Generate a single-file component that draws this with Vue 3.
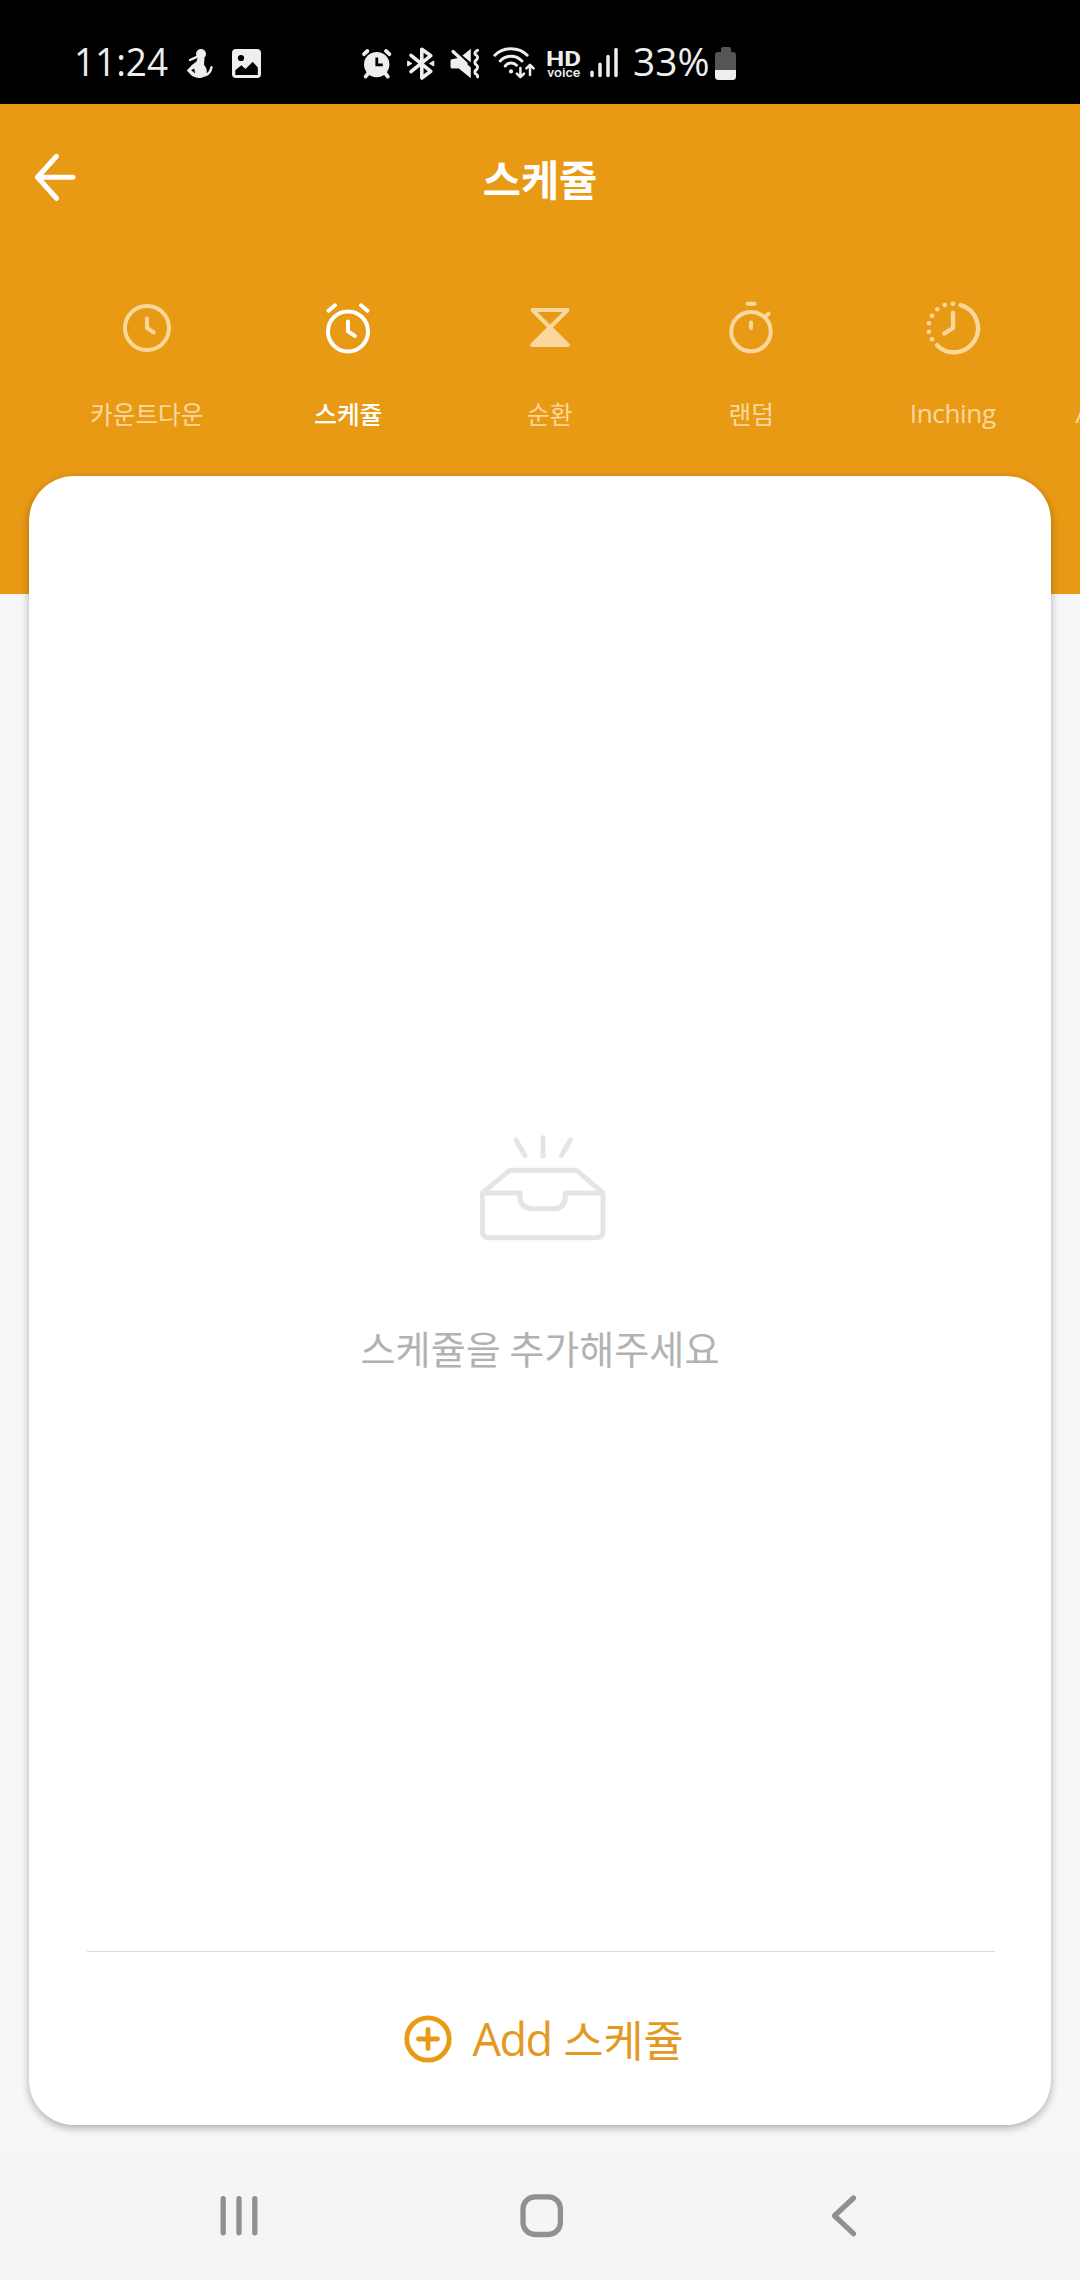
<script setup>
const tabs = [
  { id: 'countdown', label: '카운트다운' },
  { id: 'schedule', label: '스케쥴', active: true },
  { id: 'cycle', label: '순환' },
  { id: 'random', label: '랜덤' },
  { id: 'inching', label: 'Inching', latin: true },
]

const inchingDots = [
  [30, 5.7], [21.7, 7], [14.3, 11.3], [9, 17.7], [6, 25.3], [6, 33.7], [9, 41.3],
]
</script>

<template>
  <div class="screen">
    <div class="status">
      <svg class="time" width="96" height="40" viewBox="74 44 96 40">
        <text x="74" y="76.2" font-size="39" textLength="94" lengthAdjust="spacingAndGlyphs">11:24</text>
      </svg>
      <svg class="figure" width="32" height="40" viewBox="184 44 32 40">
        <circle cx="201" cy="54" r="5" />
        <path d="M197.5 58L204.5 58L204 65Q207.5 68 206.6 74Q204 78 199.5 77.9Q194 77.8 191 75L186.8 70.4Q191 65 196.5 61.5Z" />
        <path d="M190 60L196.5 57.2M205 75.3Q210.5 73.5 211.5 67.3" fill="none" stroke="#eee" stroke-width="2.4" stroke-linecap="round" />
        <path d="M191.2 70.3L194.2 68.4L195.2 73.6Z" fill="#000" />
      </svg>
      <svg class="gallery" width="33" height="40" viewBox="230 44 33 40">
        <rect x="232" y="49" width="29" height="29" rx="4" />
        <circle cx="241" cy="58" r="3.1" fill="#000" />
        <path d="M235.3 70.3L241.3 65.3L245.5 69L252.7 61.8L257.8 67.5V75H235.3Z" fill="#000" />
      </svg>
      <svg class="alarm" width="33" height="40" viewBox="360 44 33 40">
        <circle cx="376.7" cy="64.6" r="12.7" />
        <path d="M364 54.2L367.4 51M386 51L389.4 54.2M365.6 76.6L368.5 73M387.8 76.6L385 73" fill="none" stroke="#eee" stroke-width="3.8" stroke-linecap="round" />
        <path d="M376.8 57.5V64.8H382.8" fill="none" stroke="#000" stroke-width="2.8" />
      </svg>
      <svg class="icon" width="33" height="40" viewBox="404 44 33 40">
        <path d="M411 55.3L430.8 71.3L421.8 78V49.2L430.8 55.6L411 71.6" fill="none" stroke="#eee" stroke-width="3.6" stroke-linecap="round" stroke-linejoin="round" />
        <path d="M407.6 61L411.8 63.5L407.6 66ZM433.8 61L429.6 63.5L433.8 66Z" stroke="#eee" stroke-linejoin="round" />
      </svg>
      <svg class="icon" width="34" height="40" viewBox="448 44 34 40">
        <path d="M470.8 48.8V62.6L462.5 55.6ZM450.5 61Q450.5 59.2 452 59.2L460 57.5L470.8 67.5V78.2L458.8 68.4H452Q450.5 68.4 450.5 66.5Z" />
        <path d="M453 51.5L466 63.5" stroke="#eee" stroke-width="3.2" stroke-linecap="round" />
        <path d="M477.6 50.2Q474 52.5 475.2 54.4Q478.8 56.6 477 59.2Q474 61.4 475.2 64Q478.8 66 477 69Q474 71 475.2 73.6Q478 75 477.6 77" fill="none" stroke="#eee" stroke-width="2.8" stroke-linecap="round" />
      </svg>
      <svg class="wifi" width="45" height="40" viewBox="491 44 45 40">
        <g fill="none" stroke="#eee" stroke-width="2.9" stroke-linecap="round" stroke-linejoin="round">
          <path d="M494.8 55.3Q501 48.7 511 48.7T527.2 55.3M500.2 61Q504.5 56.2 511 56.2T522 61M505.2 66Q507.5 63 511 63T516.5 65.2" />
          <path d="M520.4 68V76.6M516.8 73.6L520.4 77L524 73.6M530 75V65.4M526.4 68.4L530 64.8L533.6 68.4" stroke-width="2.5" />
        </g>
        <circle cx="511" cy="71.4" r="2.1" />
      </svg>
      <svg class="wifi" width="37" height="40" viewBox="545 44 37 40">
        <text x="546" y="65.6" font-size="21" textLength="35" lengthAdjust="spacingAndGlyphs" class="roboto bold">HD</text>
        <text x="547.3" y="76.6" font-size="13.5" textLength="33" lengthAdjust="spacingAndGlyphs" class="roboto">voice</text>
      </svg>
      <svg class="signal" width="32" height="40" viewBox="588 44 32 40">
        <path d="M592 72.3V75.5M600 64.3V75.5M608 56.5V75.5M616 49.5V75.5" stroke="#eee" stroke-width="3.5" stroke-linecap="round" />
      </svg>
      <svg class="percent" width="80" height="40" viewBox="630 44 80 40">
        <text x="633" y="76.2" font-size="39" textLength="76.5" lengthAdjust="spacingAndGlyphs">33%</text>
      </svg>
      <svg class="battery" width="25" height="40" viewBox="713 44 25 40">
        <path d="M721 52V49Q721 47 723 47H729Q731 47 731 49V52H733Q736 52 736 55V70H715V55Q715 52 718 52Z" fill="#555" />
        <path d="M715 70H736V76.5Q736 80 732.5 80H718.5Q715 80 715 76.5Z" />
      </svg>
    </div>

    <header class="header">
      <div class="titlebar">
        <svg class="back" width="50" height="50" viewBox="0 0 50 50">
          <path d="M26.5 5.3L7.5 26.3L26.5 47.3M7.5 26.3H43" />
        </svg>
        <h1>스케쥴</h1>
      </div>
      <nav class="tabs">
        <div v-for="tab in tabs" :key="tab.id" class="tab" :class="{ active: tab.active, latin: tab.latin }">
          <svg width="60" height="60" viewBox="0 0 60 60">
            <template v-if="tab.id === 'countdown'">
              <circle cx="30" cy="30" r="22" />
              <path d="M30 20.5V30L36.8 34.5" />
            </template>
            <template v-else-if="tab.id === 'schedule'">
              <circle cx="30" cy="33.4" r="20" />
              <path d="M30 23.5V33.3L36.8 37.8M10.5 12.8L17 7.3M43 7.3L49.5 12.8" />
            </template>
            <template v-else-if="tab.id === 'cycle'">
              <path d="M12.5 12H47.5L12.5 47H47.5Z" />
              <path class="solid" d="M30 29.5L47.5 47H12.5Z" />
            </template>
            <template v-else-if="tab.id === 'random'">
              <circle cx="30" cy="33.6" r="19.7" />
              <path d="M26.7 5.7H33.6M44.8 18.3L47.6 15.6M30 24.5V30" />
            </template>
            <template v-else>
              <path d="M37.6 7.2A24 24 0 1 1 14 47.2M30 14.7V30L21.3 35.5" stroke-width="4.4" />
              <circle v-for="(d, i) in inchingDots" :key="i" class="solid" :cx="d[0]" :cy="d[1]" r="2.3" stroke="none" />
            </template>
          </svg>
          <span>{{ tab.label }}</span>
        </div>
        <div class="tab latin next"><span>A</span></div>
      </nav>
    </header>

    <main class="card">
      <section class="empty">
        <svg width="130" height="110" viewBox="415 70 390 330">
          <path d="M529 91L556 138M610 84V138M692 91L665 138" />
          <path d="M428 250L510 182H711L790 250V365Q790 384 771 384H447Q428 384 428 365ZM428 250H541V262Q543 297 580 297H642Q675 297 677 262V250H790" />
        </svg>
        <p>스케쥴을 추가해주세요</p>
      </section>
      <button class="add">
        <svg width="48" height="48" viewBox="0 0 48 48">
          <circle cx="24" cy="24" r="21.2" />
          <path d="M24 14.5V33.5M14.5 24H33.5" />
        </svg>
        <span class="add-en">Add</span><span class="add-ko">스케쥴</span>
      </button>
    </main>

    <footer class="navbar">
      <div><svg width="60" height="60" viewBox="0 0 60 60"><path d="M14.2 12.7V46.8M30 12.7V46.8M45.8 12.7V46.8" /></svg></div>
      <div><svg width="60" height="60" viewBox="0 0 60 60"><rect x="11" y="10.9" width="37.4" height="37.6" rx="12" /></svg></div>
      <div><svg width="60" height="60" viewBox="0 0 60 60"><path d="M39.5 12L20.5 29.8L39.5 47.6" /></svg></div>
    </footer>
  </div>
</template>

<style>
body {
  margin: 0;
  background: #f7f7f7;
}
</style>

<style scoped>
.screen {
  width: 1080px;
  height: 2280px;
  display: flex;
  flex-direction: column;
  overflow: hidden;
  background: #f7f7f7;
  font-family: "Noto Sans CJK KR", sans-serif;
}
svg {
  display: block;
  flex: none;
  overflow: visible;
}
.status {
  flex: none;
  box-sizing: border-box;
  height: 104px;
  padding: 44px 0 0 74px;
  display: flex;
  background: #000;
}
.status svg {
  fill: #eee;
}
.status text {
  font-family: "Open Sans", sans-serif;
  font-weight: 400;
}
.status .roboto {
  font-family: Roboto, sans-serif;
  font-weight: 500;
}
.status .bold {
  font-weight: 700;
}
.figure, .gallery { margin-left: 14px; }
.alarm { margin-left: 97px; }
.icon { margin-left: 11px; }
.wifi { margin-left: 9px; }
.signal { margin-left: 6px; }
.percent { margin-left: 10px; }
.battery { margin-left: 3px; }

.header {
  flex: none;
  height: 490px;
  background: #e99a15;
  color: #fff;
}
.titlebar {
  height: 148px;
  display: grid;
  grid-template-columns: 120px 1fr 120px;
  align-items: center;
}
.back {
  margin: -4px 0 0 29.5px;
  fill: none;
  stroke: #fff;
  stroke-width: 5;
  stroke-linecap: round;
  stroke-linejoin: round;
}
h1 {
  margin: 0;
  font-size: 41.5px;
  line-height: 60px;
  font-weight: 700;
  text-align: center;
}
.tabs {
  display: flex;
  margin-left: 46px;
  padding-top: 46px;
}
.tab {
  flex: none;
  width: 201.5px;
  display: flex;
  flex-direction: column;
  align-items: center;
  color: #fad89d;
}
.tab.active {
  color: #fff;
}
.tab svg {
  fill: none;
  stroke: currentColor;
  stroke-width: 4;
  stroke-linecap: round;
  stroke-linejoin: round;
}
.tab .solid {
  fill: currentColor;
}
.tab span {
  margin-top: 37px;
  font-size: 24.7px;
  line-height: 36px;
  white-space: nowrap;
}
.tab.active span {
  font-weight: 500;
}
.tab.latin span {
  font-family: "Open Sans", sans-serif;
  font-size: 26px;
  letter-spacing: -0.3px;
}
.tab.next {
  width: 40px;
  padding-top: 60px;
  margin-left: 22px;
  align-items: flex-start;
}

.card {
  flex: none;
  box-sizing: border-box;
  width: 1022px;
  height: 1649px;
  margin: -118px 0 0 29px;
  border-radius: 45px;
  background: #fff;
  box-shadow: 0 3px 9px rgba(0, 0, 0, 0.3);
  display: flex;
  flex-direction: column;
}
.empty {
  flex: 1;
  display: flex;
  flex-direction: column;
  align-items: center;
  padding-top: 657px;
}
.empty svg {
  margin-left: 6px;
  fill: none;
  stroke: #e5e5e5;
  stroke-width: 15;
  stroke-linecap: round;
  stroke-linejoin: round;
}
.empty p {
  margin: 77px 0 0;
  font-size: 38.1px;
  line-height: 56px;
  color: #b2b2b2;
}
.add {
  box-sizing: border-box;
  width: 908px;
  height: 174px;
  margin-left: 58px;
  padding: 1px 0 0 6px;
  border: 0;
  border-top: 1px solid #d9d9d9;
  background: none;
  display: flex;
  align-items: center;
  justify-content: center;
  color: #e3991f;
  font-family: inherit;
  font-size: 43.5px;
  line-height: 64px;
}
.add svg {
  fill: none;
  stroke: #e99a15;
  stroke-width: 4.8;
  stroke-linecap: round;
}
.add-en {
  margin-left: 20px;
  font-family: "Open Sans", sans-serif;
  font-size: 45px;
  letter-spacing: -1.5px;
}
.add-ko {
  margin-left: 12px;
}

.navbar {
  flex: none;
  height: 126px;
  margin-top: 29px;
  padding-left: 88.4px;
  display: flex;
  background: #f5f5f5;
}
.navbar div {
  width: 302.2px;
  display: flex;
  justify-content: center;
  padding-top: 32px;
}
.navbar svg {
  fill: none;
  stroke: #909090;
  stroke-width: 5.3;
  stroke-linecap: round;
  stroke-linejoin: round;
}
</style>
